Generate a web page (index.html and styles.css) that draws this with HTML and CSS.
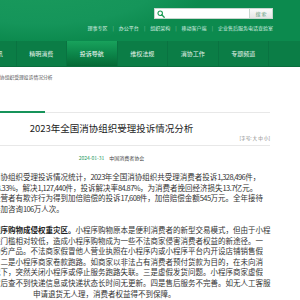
FILE: index.html
```html
<!DOCTYPE html>
<html lang="zh-CN">
<head>
    <meta charset="UTF-8">
    <meta name="viewport" content="width=device-width, initial-scale=1.0">
    <title>2023年全国消协组织受理投诉情况分析</title>
    <link rel="stylesheet" href="styles.css">
</head>
<body>
    <header class="top">
        <div class="top-inner">
            <form class="search">
                <div class="search-box">
                    <svg class="search-icon" viewBox="0 0 10 10" width="8" height="8">
                        <circle cx="4" cy="4" r="2.8" fill="none" stroke="#1c9a55" stroke-width="1.4"/>
                        <path d="M6 6 L9 9" stroke="#1c9a55" stroke-width="1.6" stroke-linecap="round"/>
                    </svg>
                </div>
                <button type="button" class="search-btn">搜 索</button>
            </form>
            <div class="quick-links">
                <a href="#">理事专区</a><span class="sep">|</span>
                <a href="#">办公平台</a><span class="sep">|</span>
                <a href="#">组织架构</a><span class="sep">|</span>
                <a href="#">移动客户端</a><span class="sep">|</span>
                <a href="#">企业售后服务电话查验室</a>
            </div>
        </div>
    </header>

    <nav class="main-nav">
        <a href="#">消费资讯</a>
        <a href="#">精明消费</a>
        <a href="#" class="active">投诉导航</a>
        <a href="#">维权法规</a>
        <a href="#">消协工作</a>
        <a href="#">专题频道</a>
    </nav>

    <div class="page">
        <div class="crumb">2023年全国消协组织受理投诉情况分析</div>

        <div class="article">
            <div class="tabline"><span class="tab"></span><span class="rule"></span></div>

            <div class="article-head">
                <h1 class="title">2023年全国消协组织受理投诉情况分析</h1>
                <div class="tools">[字号: <a href="#">大</a> <a href="#">中</a> <a href="#">小</a>]</div>
            </div>

            <div class="meta"><span class="date">2024-01-31</span><span class="source">中国消费者协会</span></div>

            <div class="content">
                <p>
                    <span class="line">消协组织受理投诉情况统计，<span class="num">2023</span>年全国消协组织共受理消费者投诉<span class="num">1,328,496</span>件，</span>
                    <span class="line"><span class="num">13.33%</span>，解决<span class="num">1,127,440</span>件，投诉解决率<span class="num">84.87%</span>，为消费者挽回经济损失<span class="num">13.7</span>亿元。</span>
                    <span class="line">经营者有欺诈行为得到加倍赔偿的投诉<span class="num">17,608</span>件，加倍赔偿金额<span class="num">545</span>万元。全年接待</span>
                    <span class="line">参加咨询<span class="num">106</span>万人次。</span>
                </p>
                <p>
                    <span class="line"><strong>程序购物成侵权重灾区。</strong>小程序购物原本是便利消费者的新型交易模式，但由于小程</span>
                    <span class="line">进门槛相对较低，造成小程序购物成为一些不法商家侵害消费者权益的新途径。一</span>
                    <span class="line">伪劣产品。不法商家假冒他人营业执照在小程序内或小程序平台内开设店铺销售假</span>
                    <span class="line">。二是小程序商家卷款跑路。如商家以非法占有消费者预付货款为目的，在未向消</span>
                    <span class="line">况下，突然关闭小程序或停止服务跑路失联。三是虚假发货问题。小程序商家虚假</span>
                    <span class="line">货后查不到快递信息或快递状态长时间无更新。四是售后服务不完善。如无人工客服</span>
                    <span class="line indent">申请退货无人理，消费者权益得不到保障。</span>
                </p>
            </div>
        </div>
    </div>
</body>
</html>
```

FILE: styles.css
```css
* {
    margin: 0;
    padding: 0;
    box-sizing: border-box;
}

body {
    background-color: #ffffff;
    color: #333333;
    font-family: "Noto Sans CJK SC", "Noto Sans", sans-serif;
    width: 300px;
    overflow: hidden;
}

a {
    color: inherit;
    text-decoration: none;
}

/* header */

.top {
    height: 41px;
    background-color: #0c8a4e;
    background-image: radial-gradient(ellipse 170px 60px at 40px -18px, #1a9a5c 0, #15955a 70%, rgba(12, 138, 78, 0) 100%);
}

.top-inner {
    display: flex;
    flex-direction: column;
    align-items: flex-end;
    padding: 8px 27px 0 0;
    gap: 6px;
}

.search {
    display: flex;
    height: 11px;
}

.search-box {
    width: 96px;
    height: 11px;
    background-color: #ffffff;
    border: 1px solid #c9d6cf;
    display: flex;
    align-items: center;
    padding-left: 2px;
}

.search-btn {
    width: 23px;
    height: 11px;
    border: 1px solid #c9d6cf;
    border-left: none;
    background: linear-gradient(#fafafa, #e6e6e6);
    color: #5d9a7a;
    font-family: inherit;
    font-size: 5px;
    line-height: 9px;
}

.quick-links {
    display: flex;
    align-items: center;
    font-size: 5px;
    line-height: 6px;
    color: #d9efe2;
}

.quick-links .sep {
    margin: 0 5px;
    color: #7fc39e;
}

/* main navigation */

.main-nav {
    height: 26px;
    display: flex;
    margin-left: -34px;
    background-color: #0b7d46;
    border-bottom: 1px solid #0a6e3d;
}

.main-nav a {
    width: 50.5px;
    flex: none;
    display: flex;
    align-items: center;
    justify-content: center;
    font-size: 6px;
    color: #e6f4ec;
    border-right: 1px solid #097341;
}

.main-nav a.active {
    background: linear-gradient(#18a25c, #0b8448 55%, #066a36);
    color: #ffffff;
}

/* article */

.page {
    width: 317px;
    margin-left: -47px;
}

.crumb {
    margin-top: 6px;
    padding-left: 17px;
    font-size: 4.8px;
    line-height: 8px;
    color: #555555;
    white-space: nowrap;
}

.tabline {
    margin-top: 30px;
    height: 2px;
    display: flex;
    align-items: center;
}

.tabline .tab {
    width: 92px;
    height: 2px;
    background-color: #17935a;
}

.tabline .rule {
    flex: 1;
    height: 1px;
    background-color: #e8e8e8;
}

.article-head {
    padding: 8px 0 4px;
    border-bottom: 1px solid #e8e8e8;
}

.title {
    font-size: 9.5px;
    font-weight: 400;
    line-height: 14px;
    text-align: center;
    color: #222222;
}

.tools {
    font-size: 4.6px;
    line-height: 6px;
    text-align: right;
    color: #777777;
}

.meta {
    margin-top: 8px;
    font-size: 5px;
    line-height: 8px;
    text-align: center;
}

.meta .date {
    color: #1f9a5e;
    margin-right: 5px;
}

.meta .source {
    color: #444444;
}

.content {
    margin-top: 10px;
    padding-left: 40px;
    font-size: 7.5px;
    line-height: 10.6px;
    color: #333333;
}

.content p {
    margin-bottom: 10.6px;
}

.content .line {
    display: block;
    white-space: nowrap;
}

.content .num {
    letter-spacing: -0.6px;
}

.content .indent {
    padding-left: 40px;
}

.content strong {
    font-weight: 700;
    color: #222222;
}
```
